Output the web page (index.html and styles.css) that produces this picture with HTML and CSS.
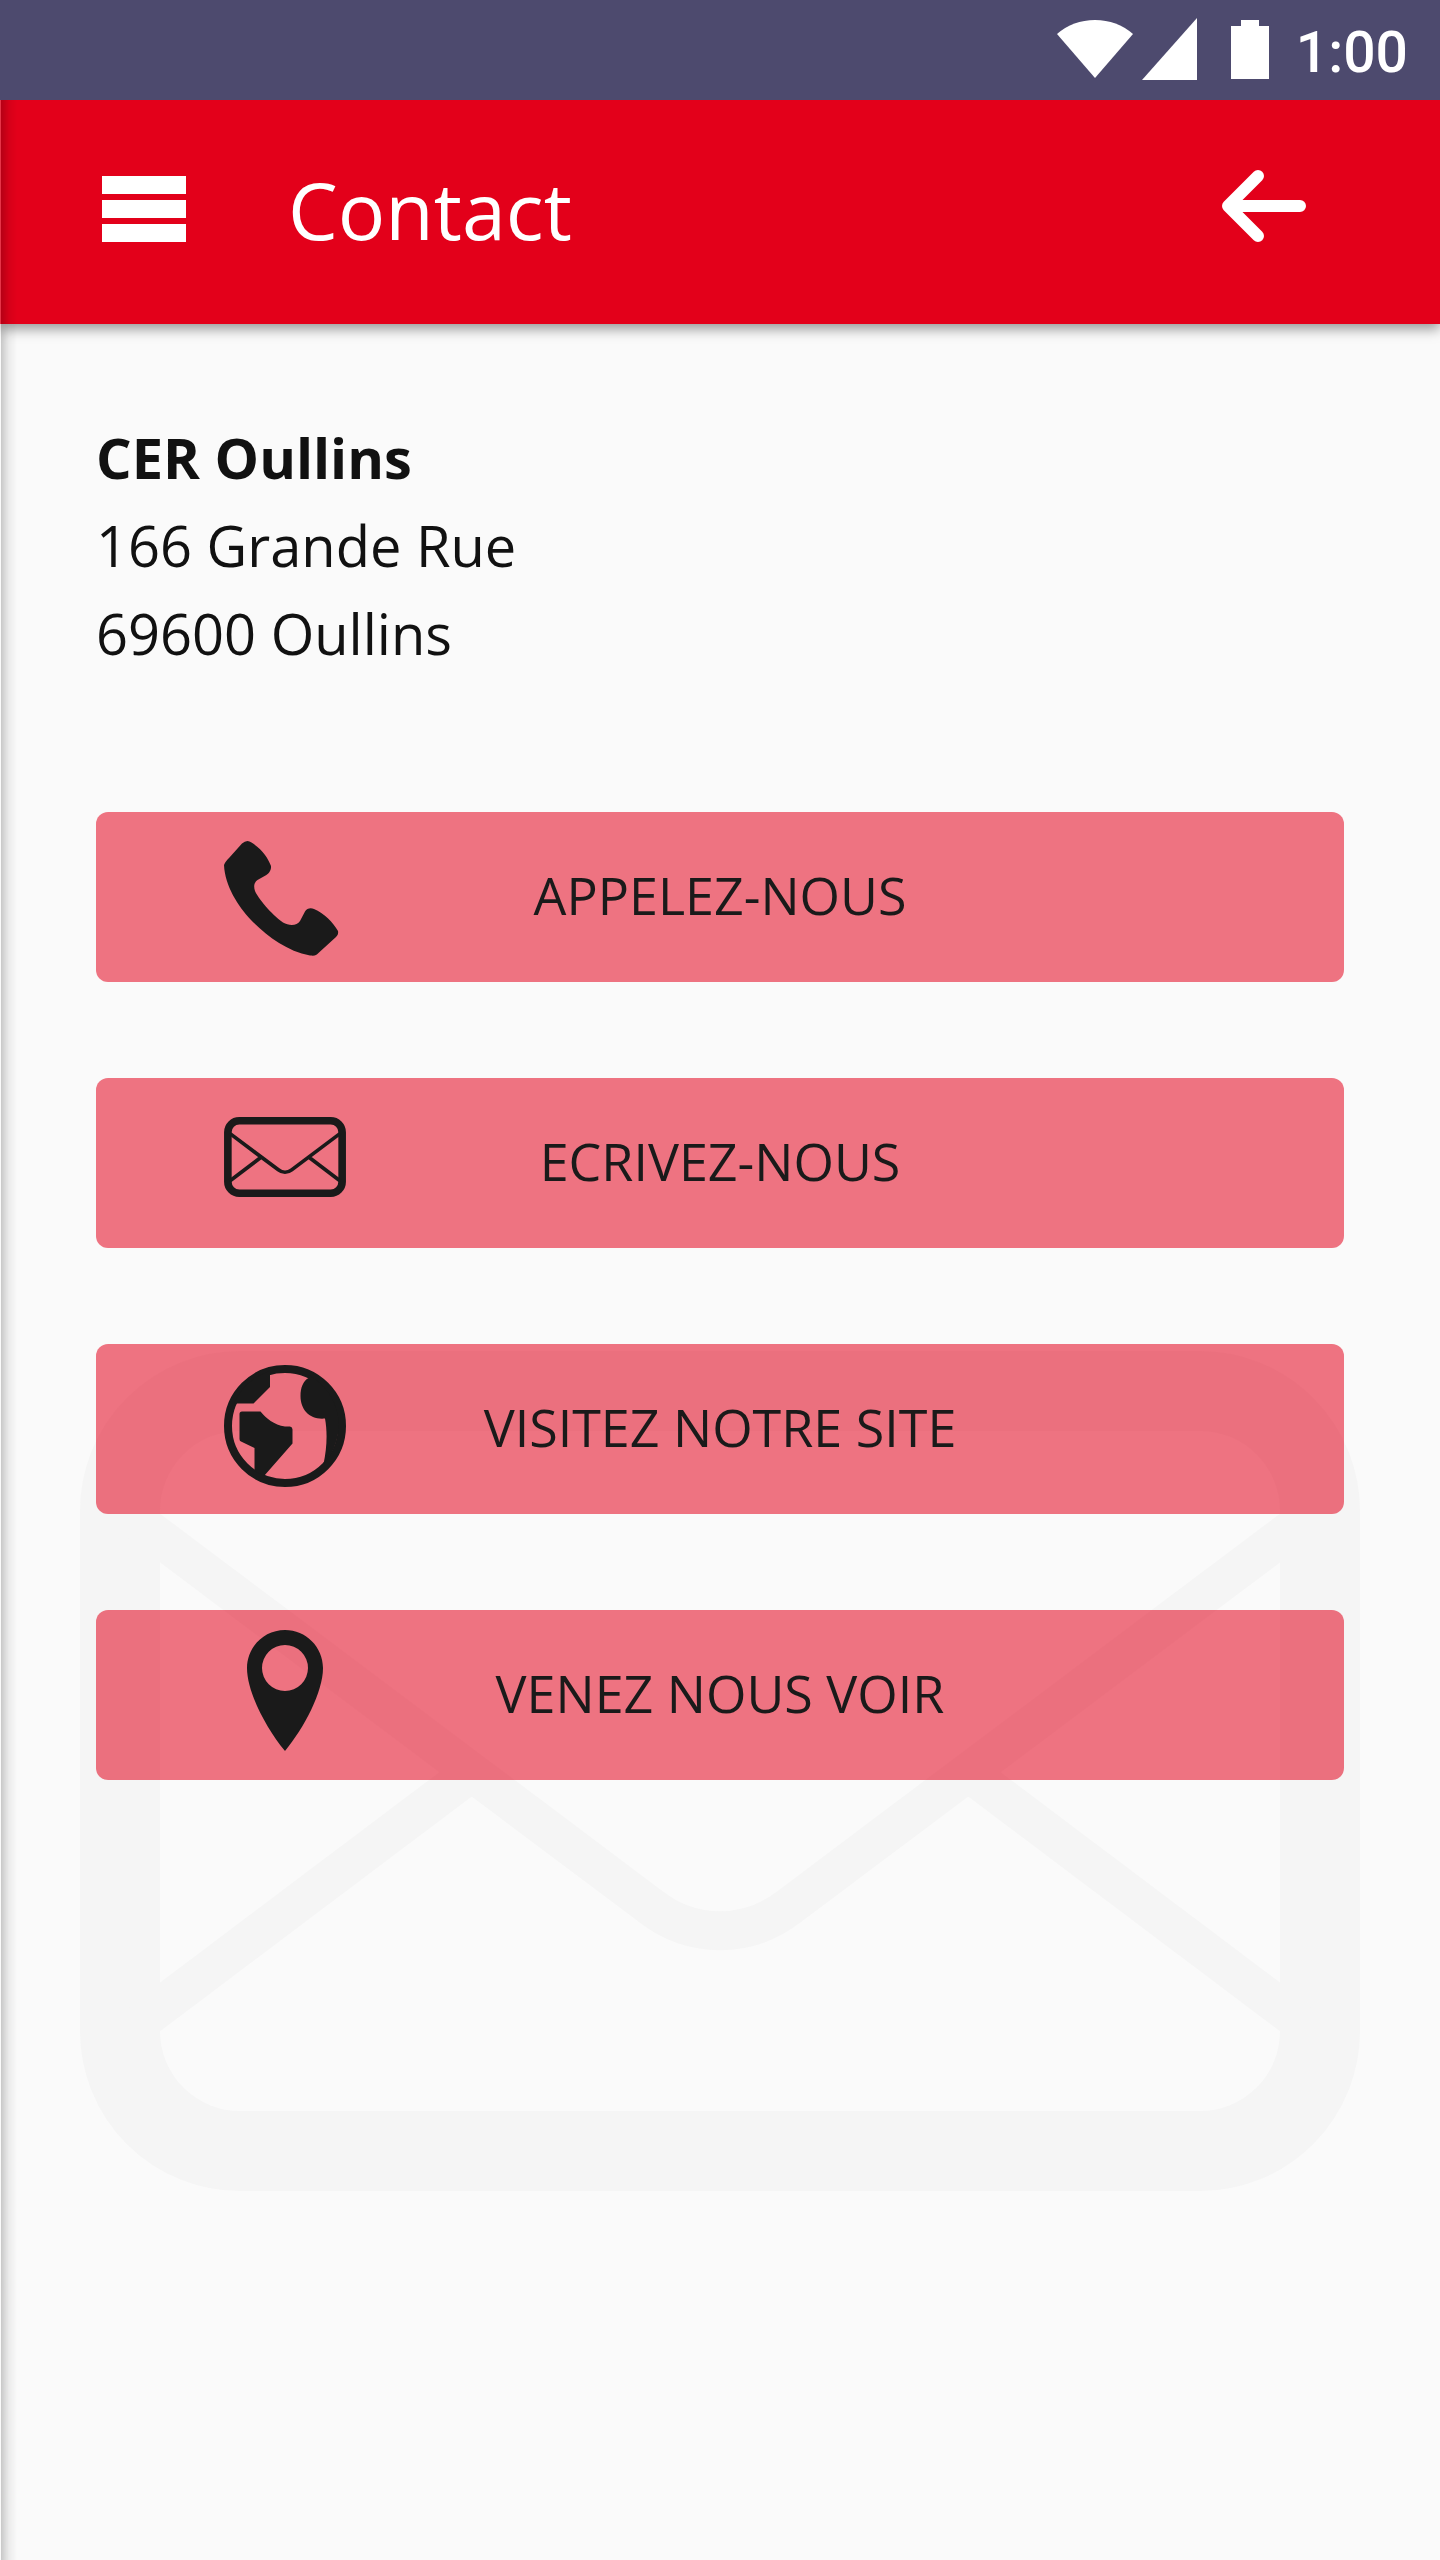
FILE: index.html
```
<!DOCTYPE html>
<html lang="fr">
<head>
<meta charset="utf-8">
<meta name="viewport" content="width=device-width, initial-scale=1">
<title>Contact</title>
<link rel="stylesheet" href="styles.css">
</head>
<body>
<svg class="sprite" aria-hidden="true">
  <symbol id="envelope" viewBox="0 0 1280 840">
    <g fill="none" stroke="currentColor">
      <rect x="40" y="40" width="1200" height="760" rx="120" stroke-width="80"/>
      <path stroke-width="39" d="M60 172L570 555C612 588 668 588 710 555L1220 172M60 671L392 421M1220 671L888 421"/>
    </g>
  </symbol>
</svg>

<div class="status-bar">
  <svg width="78" height="64" viewBox="0 0 78 64" aria-hidden="true"><path fill="currentColor" d="M39 60L1 16Q17 2 39 2T77 16Z"/></svg>
  <svg width="56" height="64" viewBox="0 0 56 64" aria-hidden="true"><path fill="currentColor" d="M55 0V62H0Z"/></svg>
  <svg width="80" height="64" viewBox="0 0 80 64" aria-hidden="true"><path fill="currentColor" d="M35 2H53V8H63V61H25V8H35Z"/></svg>
  <span class="clock">1:00</span>
</div>

<div class="screen">
  <header class="app-bar">
    <button class="icon-button" type="button" aria-label="Menu">
      <svg width="84" height="78" viewBox="0 0 84 78" aria-hidden="true"><path fill="currentColor" d="M0 6H84V24H0ZM0 30H84V48H0ZM0 54H84V72H0Z"/></svg>
    </button>
    <h1 class="title">Contact</h1>
    <button class="icon-button" type="button" aria-label="Retour">
      <svg width="84" height="78" viewBox="0 0 84 78" aria-hidden="true"><path fill="none" stroke="currentColor" stroke-width="12" stroke-linecap="round" stroke-linejoin="round" d="M36 6L6 36L36 66M8 36H78"/></svg>
    </button>
  </header>

  <main class="content">
    <svg class="watermark" viewBox="0 0 1280 840" aria-hidden="true"><use href="#envelope"/></svg>

    <address class="address">
      <strong>CER Oullins</strong><br>
      166 Grande Rue<br>
      69600 Oullins
    </address>

    <div class="actions">
      <button class="action" type="button">
        <svg class="action-icon" viewBox="0 0 122 122" aria-hidden="true"><path fill="currentColor" d="M0 31C1 28 3 26 5 24L18 9.500Q23 5 27.500 8.500C38 15 44 24 47 32C47.500 37 44 40 41.500 41.500L33.500 46C30 48.500 29.500 52.500 31 57C34 64 47 80 59 88.500C65 92 73 92 76 87L81 77.500C83 74 87 73.500 90 75C100 79.500 109 88 114 97C114.500 100 113.500 101.500 112 103L95 118.500C92 121.500 91 122 86 121.500C62 117 42 101 27 86C14 72 1 52 0 31Z"/></svg>
        <span>APPELEZ-NOUS</span>
      </button>
      <button class="action" type="button">
        <svg class="action-icon" viewBox="0 0 122 122" aria-hidden="true"><use href="#envelope" y="17" width="122" height="80"/></svg>
        <span>ECRIVEZ-NOUS</span>
      </button>
      <button class="action" type="button">
        <svg class="action-icon" viewBox="0 0 122 122" aria-hidden="true">
          <circle cx="61" cy="60" r="57" fill="none" stroke="currentColor" stroke-width="8"/>
          <path fill="currentColor" d="M46 5V21L29.500 37.500H10A57 57 0 0 1 46 5ZM18 45.500H36.500C42 52 50 59 61 60.500H66Q68.500 61 68.500 63.500V77.500L40 110L30.500 105V82L17 75.500Q15.500 75 15.500 73V48Q15.500 45.500 18 45.500ZM84.500 12C79 15 76.500 22 76.500 30C76.500 44 86 54 101 52.500C103.500 66 103 82 99.500 98A57 57 0 0 0 84.500 9Z"/>
        </svg>
        <span>VISITEZ NOTRE SITE</span>
      </button>
      <button class="action" type="button">
        <svg class="action-icon" viewBox="0 0 122 122" aria-hidden="true"><path fill="currentColor" fill-rule="evenodd" d="M61 -2C40 -2 23 15 23 36C23 60 42 96 61 119C80 96 99 60 99 36C99 15 82 -2 61 -2ZM61 13A23 23 0 1 1 61 59A23 23 0 1 1 61 13Z"/></svg>
        <span>VENEZ NOUS VOIR</span>
      </button>
    </div>
  </main>
</div>
</body>
</html>
```
FILE: styles.css
```
* {
  box-sizing: border-box;
}

body {
  margin: 0;
  min-height: 100vh;
  display: flex;
  flex-direction: column;
  background: #fafafa;
  color: #111;
  font-family: "Open Sans", "Noto Sans", sans-serif;
}

svg {
  display: block;
}

button {
  margin: 0;
  padding: 0;
  border: 0;
  background: none;
  color: inherit;
  font: inherit;
  cursor: pointer;
}

.sprite {
  position: absolute;
  width: 0;
  height: 0;
}

.status-bar {
  display: flex;
  align-items: center;
  justify-content: flex-end;
  gap: 8px;
  height: 100px;
  padding-right: 32px;
  background: #4d4a6e;
  color: #fff;
}

.clock {
  font-family: Roboto, sans-serif;
  font-size: 57px;
  font-weight: 500;
  line-height: 64px;
  padding: 5px 0 0 2px;
}

.screen {
  position: relative;
  flex: 1;
  display: flex;
  flex-direction: column;
  overflow: hidden;
}

/* Edge shadow of the side drawer */
.screen::after {
  content: "";
  position: absolute;
  z-index: 2;
  inset: 0 auto 0 0;
  width: 16px;
  border-left: 1px solid rgba(255, 255, 255, 0.2);
  background: linear-gradient(to right, rgba(0, 0, 0, 0.2), rgba(0, 0, 0, 0.06) 50%, transparent);
  pointer-events: none;
}

.app-bar {
  position: relative;
  z-index: 1;
  display: flex;
  align-items: center;
  height: 224px;
  padding: 0 134px 6px 102px;
  background: #e3001a;
  color: #fff;
  box-shadow: 0 5px 12px rgba(0, 0, 0, 0.4);
}

.title {
  flex: 1;
  margin: 0 0 0 102px;
  padding-top: 2px;
  font-size: 79px;
  font-weight: 400;
  line-height: 108px;
}

.content {
  position: relative;
  z-index: 0;
  flex: 1;
  padding: 89px 96px 96px;
}

.watermark {
  position: absolute;
  z-index: -1;
  top: 1027px;
  left: 80px;
  width: calc(100% - 160px);
  color: #f5f5f5;
}

.address {
  font-size: 56px;
  font-style: normal;
  line-height: 88px;
}

.actions {
  display: flex;
  flex-direction: column;
  gap: 96px;
  margin-top: 135px;
}

.action {
  display: grid;
  grid-template-columns: 122px 1fr 122px;
  align-items: center;
  min-height: 170px;
  padding: 0 128px 4px;
  border-radius: 12px;
  background: rgba(227, 0, 26, 0.54);
  color: #1a1a1a;
  font-size: 52px;
  line-height: 72px;
  text-align: center;
}

.action-icon {
  width: 122px;
  height: 122px;
  overflow: visible;
}
```
